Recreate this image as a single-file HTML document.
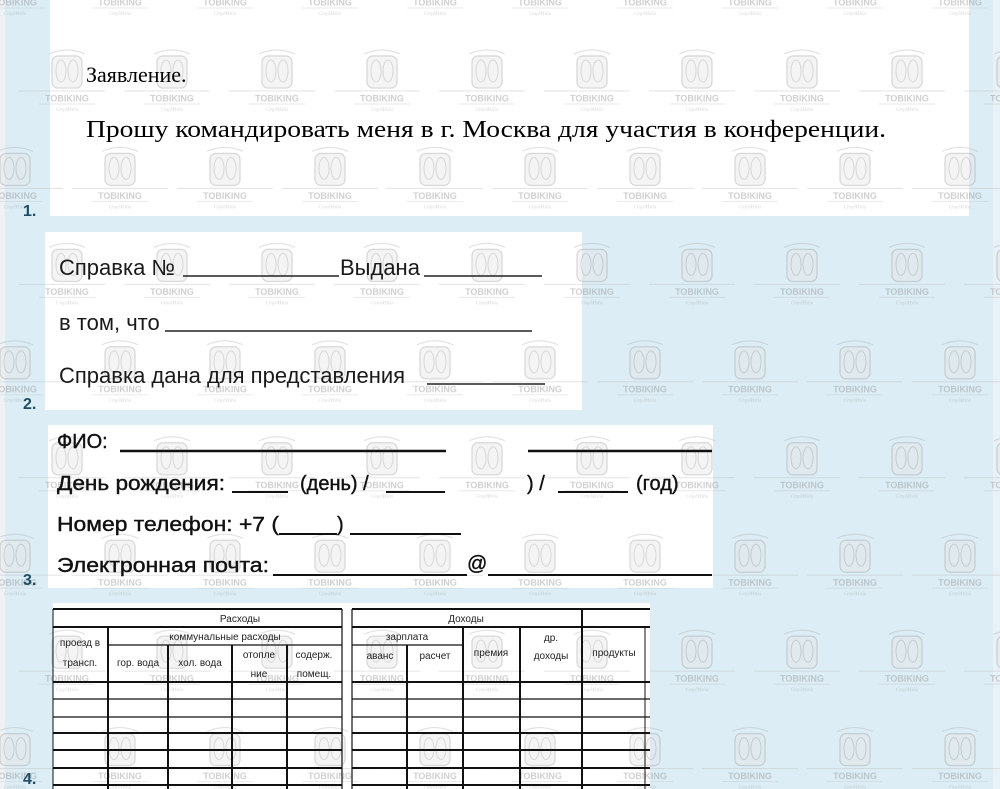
<!DOCTYPE html>
<html><head><meta charset="utf-8"><style>
html,body{margin:0;padding:0;width:1000px;height:789px;overflow:hidden;background:#dcedf5}
svg{display:block}
</style></head><body>
<svg width="1000" height="789" viewBox="0 0 1000 789" xmlns="http://www.w3.org/2000/svg">
<defs>
<pattern id="wm" patternUnits="userSpaceOnUse" x="0" y="0" width="105" height="193.4">
  <g opacity="0.4">
    <g transform="translate(67,98)">
      <path d="M-18,-44 Q0,-52 18,-44" fill="none" stroke="#aaa" stroke-width="1"/>
      <rect x="-15" y="-42" width="30" height="32" rx="6" fill="#e4e4e4" stroke="#999" stroke-width="1.2"/>
      <ellipse cx="-6" cy="-27" rx="5" ry="11" fill="none" stroke="#999" stroke-width="1"/>
      <ellipse cx="6" cy="-27" rx="5" ry="11" fill="none" stroke="#999" stroke-width="1"/>
      <line x1="-48" y1="-7" x2="48" y2="-7" stroke="#bbb" stroke-width="1"/>
      <text x="0" y="3.5" font-family="Liberation Sans, sans-serif" font-weight="bold" font-size="9" fill="#888" text-anchor="middle">TOBIKING</text>
      <line x1="-28" y1="6" x2="28" y2="6" stroke="#bbb" stroke-width="0.8"/>
      <text x="0" y="13" font-family="Liberation Serif, serif" font-style="italic" font-size="5" fill="#999" text-anchor="middle">СтудИзба</text>
    </g>
    <g transform="translate(15,195.4)">
      <path d="M-18,-44 Q0,-52 18,-44" fill="none" stroke="#aaa" stroke-width="1"/>
      <rect x="-15" y="-42" width="30" height="32" rx="6" fill="#e4e4e4" stroke="#999" stroke-width="1.2"/>
      <ellipse cx="-6" cy="-27" rx="5" ry="11" fill="none" stroke="#999" stroke-width="1"/>
      <ellipse cx="6" cy="-27" rx="5" ry="11" fill="none" stroke="#999" stroke-width="1"/>
      <line x1="-48" y1="-7" x2="48" y2="-7" stroke="#bbb" stroke-width="1"/>
      <text x="0" y="3.5" font-family="Liberation Sans, sans-serif" font-weight="bold" font-size="9" fill="#888" text-anchor="middle">TOBIKING</text>
    </g>
    <g transform="translate(120,195.4)">
      <path d="M-18,-44 Q0,-52 18,-44" fill="none" stroke="#aaa" stroke-width="1"/>
      <rect x="-15" y="-42" width="30" height="32" rx="6" fill="#e4e4e4" stroke="#999" stroke-width="1.2"/>
      <ellipse cx="-6" cy="-27" rx="5" ry="11" fill="none" stroke="#999" stroke-width="1"/>
      <ellipse cx="6" cy="-27" rx="5" ry="11" fill="none" stroke="#999" stroke-width="1"/>
      <line x1="-48" y1="-7" x2="48" y2="-7" stroke="#bbb" stroke-width="1"/>
      <text x="0" y="3.5" font-family="Liberation Sans, sans-serif" font-weight="bold" font-size="9" fill="#888" text-anchor="middle">TOBIKING</text>
    </g>
    <g transform="translate(15,2)">
      <line x1="-28" y1="6" x2="28" y2="6" stroke="#bbb" stroke-width="0.8"/>
      <text x="0" y="3.5" font-family="Liberation Sans, sans-serif" font-weight="bold" font-size="9" fill="#888" text-anchor="middle">TOBIKING</text>
      <text x="0" y="13" font-family="Liberation Serif, serif" font-style="italic" font-size="5" fill="#999" text-anchor="middle">СтудИзба</text>
    </g>
    <g transform="translate(120,2)">
      <line x1="-28" y1="6" x2="28" y2="6" stroke="#bbb" stroke-width="0.8"/>
      <text x="0" y="3.5" font-family="Liberation Sans, sans-serif" font-weight="bold" font-size="9" fill="#888" text-anchor="middle">TOBIKING</text>
      <text x="0" y="13" font-family="Liberation Serif, serif" font-style="italic" font-size="5" fill="#999" text-anchor="middle">СтудИзба</text>
    </g>
  </g>
</pattern>
</defs>

<rect x="0" y="0" width="1000" height="789" fill="#dcedf5"/>
<rect x="0" y="0" width="5" height="789" fill="#eef2f4"/>
<rect x="993" y="0" width="7" height="789" fill="#e8f1f5"/>

<rect x="50" y="0" width="919" height="216" fill="#fff"/>
<rect x="45" y="232" width="537" height="178" fill="#fff"/>
<rect x="48" y="425" width="665" height="163" fill="#fff"/>
<rect x="53" y="603" width="597" height="186" fill="#fff"/>

<rect x="0" y="0" width="1000" height="789" fill="url(#wm)"/>

<g font-family="Liberation Serif, serif" fill="#000">
  <text x="86" y="82" font-size="22">Заявление.</text>
  <text x="86" y="137" font-size="24.5" textLength="800" lengthAdjust="spacingAndGlyphs">Прошу командировать меня в г. Москва для участия в конференции.</text>
</g>

<g font-family="Liberation Sans, sans-serif" fill="#1a1a1a" font-size="22">
  <text x="59" y="275">Справка №</text>
  <line x1="183" y1="276" x2="339" y2="276" stroke="#222" stroke-width="1.5"/>
  <text x="340" y="275">Выдана</text>
  <line x1="424" y1="276" x2="542" y2="276" stroke="#222" stroke-width="1.5"/>
  <text x="59" y="330">в том, что</text>
  <line x1="165" y1="331" x2="532" y2="331" stroke="#222" stroke-width="1.5"/>
  <text x="59" y="383">Справка дана для представления</text>
  <line x1="427" y1="384" x2="545" y2="384" stroke="#222" stroke-width="1.5"/>
</g>

<g font-family="Liberation Sans, sans-serif" fill="#111" font-size="20" stroke="#111" stroke-width="0.4">
  <text x="57" y="448">ФИО:</text>
  <line x1="120" y1="451" x2="446" y2="451" stroke-width="2.5"/>
  <line x1="528" y1="451" x2="712" y2="451" stroke-width="2.5"/>
  <text x="57" y="490" textLength="168" lengthAdjust="spacingAndGlyphs">День рождения:</text>
  <line x1="232" y1="492" x2="288" y2="492" stroke-width="2"/>
  <text x="300" y="490">(день) /</text>
  <line x1="386" y1="492" x2="445" y2="492" stroke-width="2"/>
  <text x="527" y="490">) /</text>
  <line x1="558" y1="492" x2="628" y2="492" stroke-width="2"/>
  <text x="636" y="490">(год)</text>
  <text x="57" y="531" textLength="222" lengthAdjust="spacingAndGlyphs">Номер телефон: +7 (</text>
  <line x1="279" y1="534" x2="337" y2="534" stroke-width="2"/>
  <text x="337" y="531">)</text>
  <line x1="350" y1="534" x2="461" y2="534" stroke-width="2"/>
  <text x="57" y="572" textLength="212" lengthAdjust="spacingAndGlyphs">Электронная почта:</text>
  <line x1="273" y1="575" x2="467" y2="575" stroke-width="2"/>
  <text x="467" y="570">@</text>
  <line x1="488" y1="575" x2="712" y2="575" stroke-width="2"/>
</g>

<g stroke="#111" stroke-width="2" fill="none">
  <line x1="53" y1="609" x2="342" y2="609"/>
  <line x1="53" y1="627" x2="342" y2="627"/>
  <line x1="108" y1="645" x2="342" y2="645" stroke-width="1.2"/>
  <line x1="53" y1="682" x2="342" y2="682"/>
  <line x1="53" y1="699" x2="342" y2="699" stroke-width="1.2"/>
  <line x1="53" y1="717" x2="342" y2="717" stroke-width="1.2"/>
  <line x1="53" y1="733" x2="342" y2="733"/>
  <line x1="53" y1="750" x2="342" y2="750"/>
  <line x1="53" y1="768" x2="342" y2="768"/>
  <line x1="53" y1="785" x2="342" y2="785"/>
  <line x1="108" y1="627" x2="108" y2="789"/>
  <line x1="168" y1="645" x2="168" y2="789"/>
  <line x1="232" y1="645" x2="232" y2="789"/>
  <line x1="287" y1="645" x2="287" y2="789"/>
  <line x1="342" y1="609" x2="342" y2="789" stroke-width="1.2"/>
  <line x1="53" y1="609" x2="53" y2="789" stroke-width="1"/>
  <line x1="352" y1="609" x2="650" y2="609"/>
  <line x1="352" y1="627" x2="650" y2="627"/>
  <line x1="352" y1="645" x2="463" y2="645" stroke-width="1.2"/>
  <line x1="352" y1="682" x2="650" y2="682"/>
  <line x1="352" y1="699" x2="650" y2="699" stroke-width="1.2"/>
  <line x1="352" y1="717" x2="650" y2="717" stroke-width="1.2"/>
  <line x1="352" y1="733" x2="650" y2="733"/>
  <line x1="352" y1="750" x2="650" y2="750"/>
  <line x1="352" y1="768" x2="650" y2="768"/>
  <line x1="352" y1="785" x2="650" y2="785"/>
  <line x1="352" y1="609" x2="352" y2="789" stroke-width="1.2"/>
  <line x1="407" y1="645" x2="407" y2="789"/>
  <line x1="463" y1="627" x2="463" y2="789"/>
  <line x1="520" y1="627" x2="520" y2="789"/>
  <line x1="582" y1="609" x2="582" y2="789"/>
  <line x1="645" y1="627" x2="645" y2="789" stroke-width="1"/>
</g>
<g font-family="Liberation Sans, sans-serif" font-size="10" fill="#222" text-anchor="middle">
  <text x="240" y="622">Расходы</text>
  <text x="80" y="646">проезд в</text>
  <text x="80" y="666">трансп.</text>
  <text x="225" y="640">коммунальные расходы</text>
  <text x="138" y="666">гор. вода</text>
  <text x="200" y="666">хол. вода</text>
  <text x="259" y="658">отопле</text>
  <text x="259" y="677">ние</text>
  <text x="314" y="658">содерж.</text>
  <text x="314" y="677">помещ.</text>
  <text x="466" y="622">Доходы</text>
  <text x="407" y="640">зарплата</text>
  <text x="380" y="659">аванс</text>
  <text x="435" y="659">расчет</text>
  <text x="491" y="656">премия</text>
  <text x="551" y="641">др.</text>
  <text x="551" y="659">доходы</text>
  <text x="614" y="656">продукты</text>
</g>

<g font-family="Liberation Sans, sans-serif" font-weight="bold" font-size="16" fill="#1d4e63">
  <text x="23" y="216">1.</text>
  <text x="23" y="409">2.</text>
  <text x="23" y="585">3.</text>
  <text x="23" y="784">4.</text>
</g>
</svg>
</body></html>
